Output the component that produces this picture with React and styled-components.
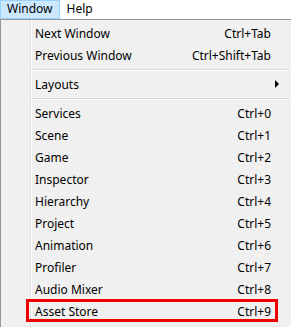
import styled, { createGlobalStyle } from "styled-components";

const GlobalStyle = createGlobalStyle`
  html, body {
    margin: 0;
    padding: 0;
    background: #f0f0f0;
    overflow: hidden;
  }
  body {
    font-family: "Noto Sans", "Open Sans", sans-serif;
    font-size: 12px;
    color: #000;
  }
`;

const groups = [
  [
    { label: "Next Window", shortcut: "Ctrl+Tab" },
    { label: "Previous Window", shortcut: "Ctrl+Shift+Tab" },
  ],
  [{ label: "Layouts", submenu: true }],
  [
    { label: "Services", shortcut: "Ctrl+0" },
    { label: "Scene", shortcut: "Ctrl+1" },
    { label: "Game", shortcut: "Ctrl+2" },
    { label: "Inspector", shortcut: "Ctrl+3" },
    { label: "Hierarchy", shortcut: "Ctrl+4" },
    { label: "Project", shortcut: "Ctrl+5" },
    { label: "Animation", shortcut: "Ctrl+6" },
    { label: "Profiler", shortcut: "Ctrl+7" },
    { label: "Audio Mixer", shortcut: "Ctrl+8" },
    { label: "Asset Store", shortcut: "Ctrl+9", marked: true },
  ],
];

export default function App() {
  return (
    <>
      <GlobalStyle />
      <MenuBar>
        <BarItem $active>Window</BarItem>
        <BarItem>Help</BarItem>
      </MenuBar>

      <Dropdown>
        {groups.map((group, gi) => (
          <div key={gi}>
            {gi > 0 && <Separator />}
            {group.map((item) => (
              <Row key={item.label} $marked={item.marked}>
                <Label>{item.label}</Label>
                <Shortcut>{item.shortcut}</Shortcut>
                <ArrowCell>{item.submenu && <Arrow />}</ArrowCell>
              </Row>
            ))}
          </div>
        ))}
      </Dropdown>
    </>
  );
}

/* ========================= STYLES ========================= */

const MenuBar = styled.div`
  display: flex;
  height: 19px;
  background: #ffffff;
`;

const BarItem = styled.div`
  display: flex;
  align-items: center;
  padding: 0 6px 1px 6px;
  border: 1px solid ${(p) => (p.$active ? "#99d1ff" : "transparent")};
  background: ${(p) => (p.$active ? "#cce8ff" : "transparent")};
  line-height: 1;
`;

const Dropdown = styled.div`
  position: relative;
  border-top: 1px solid #979797;
  border-left: 1px solid #979797;
  padding: 2px 0 20px;
  background: linear-gradient(
    to right,
    #f0f0f0 29px,
    #e2e2e2 29px,
    #e2e2e2 30px,
    #ffffff 30px,
    #ffffff 31px,
    #f0f0f0 31px
  );
`;

const Row = styled.div`
  position: relative;
  display: grid;
  grid-template-columns: 1fr auto 20px;
  align-items: center;
  height: 22px;
  padding-left: 34px;

  ${(p) =>
    p.$marked &&
    `
    &::after {
      content: "";
      position: absolute;
      left: 25px;
      right: 13px;
      top: -1px;
      bottom: 0;
      border: 3px solid #ee0000;
    }
  `}
`;

const Label = styled.span`
  white-space: nowrap;
`;

const Shortcut = styled.span`
  white-space: nowrap;
  text-align: right;
`;

const ArrowCell = styled.span`
  display: flex;
  align-items: center;
  padding-left: 4px;
`;

const Arrow = styled.span`
  width: 0;
  height: 0;
  border-top: 4px solid transparent;
  border-bottom: 4px solid transparent;
  border-left: 4px solid #000;
`;

const Separator = styled.div`
  height: 1px;
  margin: 3px 2px 2px 30px;
  background: #d7d7d7;
  border-bottom: 1px solid #ffffff;
`;
